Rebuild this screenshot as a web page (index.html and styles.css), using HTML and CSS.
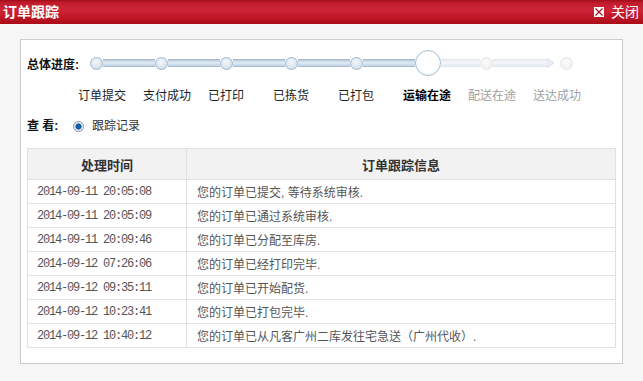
FILE: index.html
```html
<!DOCTYPE html>
<html lang="zh-CN">
<head>
    <meta charset="UTF-8">
    <title>订单跟踪</title>
    <link rel="stylesheet" href="styles.css">
</head>
<body>
    <div class="dialog">
        <div class="dialog-header">
            <span class="dialog-title">订单跟踪</span>
            <span class="dialog-close">
                <svg class="close-icon" width="10" height="10" viewBox="0 0 10 10">
                    <rect x="0" y="0" width="10" height="10" fill="#ffffff"/>
                    <path d="M1.5 1.5 L8.5 8.5 M8.5 1.5 L1.5 8.5" stroke="#a8101c" stroke-width="1.2"/>
                </svg>
                关闭
            </span>
        </div>
        <div class="dialog-body">
            <div class="panel">
                <div class="progress-row">
                    <span class="progress-label">总体进度:</span>
                    <div class="track">
                        <span class="node"></span>
                        <span class="seg"></span>
                        <span class="node"></span>
                        <span class="seg"></span>
                        <span class="node"></span>
                        <span class="seg"></span>
                        <span class="node"></span>
                        <span class="seg"></span>
                        <span class="node"></span>
                        <span class="seg"></span>
                        <span class="node node-current"></span>
                        <span class="seg seg-todo seg-short"></span>
                        <span class="node node-todo"></span>
                        <span class="seg seg-todo seg-long"></span>
                        <svg class="arrow" width="8" height="12" viewBox="0 0 8 12">
                            <polygon points="0,2 2,2 7,6 2,10 0,10" fill="#e8eef3" stroke="#dbe3ea" stroke-width="1"/>
                        </svg>
                        <span class="node node-todo node-end"></span>
                    </div>
                </div>
                <div class="step-names">
                    <span class="step">订单提交</span>
                    <span class="step">支付成功</span>
                    <span class="step">已打印</span>
                    <span class="step">已拣货</span>
                    <span class="step">已打包</span>
                    <span class="step step-current">运输在途</span>
                    <span class="step step-todo">配送在途</span>
                    <span class="step step-todo">送达成功</span>
                </div>
                <div class="view-row">
                    <span class="view-label">查 看:</span>
                    <span class="radio"></span>
                    <span>跟踪记录</span>
                </div>
                <table class="track-table">
                    <thead>
                        <tr>
                            <th class="col-time">处理时间</th>
                            <th>订单跟踪信息</th>
                        </tr>
                    </thead>
                    <tbody>
                        <tr><td class="time">2014-09-11 20:05:08</td><td>您的订单已提交, 等待系统审核.</td></tr>
                        <tr><td class="time">2014-09-11 20:05:09</td><td>您的订单已通过系统审核.</td></tr>
                        <tr><td class="time">2014-09-11 20:09:46</td><td>您的订单已分配至库房.</td></tr>
                        <tr><td class="time">2014-09-12 07:26:06</td><td>您的订单已经打印完毕.</td></tr>
                        <tr><td class="time">2014-09-12 09:35:11</td><td>您的订单已开始配货.</td></tr>
                        <tr><td class="time">2014-09-12 10:23:41</td><td>您的订单已打包完毕.</td></tr>
                        <tr><td class="time">2014-09-12 10:40:12</td><td>您的订单已从凡客广州二库发往宅急送（广州代收）.</td></tr>
                    </tbody>
                </table>
            </div>
        </div>
    </div>
</body>
</html>
```

FILE: styles.css
```css
body {
    margin: 0;
    padding: 0;
    background-color: #f6f6f6;
    font-family: "Liberation Sans", "Noto Sans CJK SC", sans-serif;
    font-size: 12px;
    color: #333;
}
.dialog {
    width: 643px;
    height: 381px;
    background-color: #f6f6f6;
}
.dialog-header {
    height: 24px;
    display: flex;
    align-items: center;
    justify-content: space-between;
    padding: 0 4px 0 3px;
    color: white;
    background: linear-gradient(#a20d1a 0, #c21c2c 3px, #cd2536 10px, #c31a2a 16px, #a90b16 24px);
}
.dialog-title {
    font-size: 14px;
    font-weight: bold;
    line-height: 24px;
}
.dialog-close {
    display: flex;
    align-items: center;
    gap: 7px;
    font-size: 14px;
    line-height: 24px;
}
.close-icon {
    display: block;
}
.dialog-body {
    padding: 15px 20px 0 20px;
}
.panel {
    background-color: white;
    border: 1px solid #cccccc;
    padding: 10px 6px 15px 6px;
}
.progress-row {
    display: flex;
    align-items: center;
    height: 26px;
}
.progress-label {
    font-weight: bold;
    color: #111;
    width: 63px;
}
.track {
    display: flex;
    align-items: center;
}
.node {
    width: 11px;
    height: 11px;
    border-radius: 50%;
    border: 1px solid #9fb5ca;
    background: radial-gradient(circle at 45% 35%, #f3f7fb, #c8d8e7);
    flex-shrink: 0;
}
.seg {
    width: 52px;
    height: 6px;
    border-top: 1px solid #a3b9ce;
    border-bottom: 1px solid #a3b9ce;
    background: linear-gradient(#b9cbdc, #e1ebf3 45%, #c3d4e3);
}
.node-current {
    width: 24px;
    height: 24px;
    border-color: #a6bcd2;
    background: radial-gradient(circle at 50% 45%, #ffffff 55%, #e3ebf3);
}
.node-todo {
    border-color: #e2e6ea;
    background: radial-gradient(circle at 45% 35%, #fbfbfb, #ececec);
}
.seg-todo {
    border-color: #dfe6ec;
    background: linear-gradient(#e7edf2, #f3f6f9 45%, #e5ebf0);
}
.seg-short {
    width: 39px;
}
.seg-long {
    width: 55px;
}
.arrow {
    display: block;
    margin-left: -1px;
}
.node-end {
    margin-left: 5px;
}
.step-names {
    display: flex;
    margin: 11px 0 0 51px;
    line-height: 18px;
}
.step {
    width: 65px;
    color: #222;
}
.step-current {
    font-weight: bold;
    color: #000;
}
.step-todo {
    color: #a0a0a0;
}
.view-row {
    display: flex;
    align-items: center;
    margin-top: 12px;
    line-height: 18px;
}
.view-label {
    font-weight: bold;
    color: #111;
    width: 46px;
    white-space: pre;
}
.radio {
    width: 9px;
    height: 9px;
    border-radius: 50%;
    border: 1px solid #8e9aa6;
    background: radial-gradient(circle, #1e6fc4 0, #0e4f9a 2.5px, #e8edf2 3.5px, #d3dae2);
    margin-right: 8px;
}
.track-table {
    width: 100%;
    border-collapse: collapse;
    margin-top: 13px;
}
.track-table th, .track-table td {
    border: 1px solid #e1e1e1;
}
.track-table th {
    height: 30px;
    background-color: #f2f2f2;
    font-size: 13px;
    font-weight: bold;
    color: #333;
    padding: 0;
}
.col-time {
    width: 158px;
}
.track-table td {
    height: 23px;
    padding: 0 0 0 10px;
    color: #555;
}
.track-table td.time {
    font-family: "Liberation Mono", monospace;
    font-size: 12px;
    letter-spacing: -1.2px;
    color: #555;
    padding-left: 9px;
}
```
